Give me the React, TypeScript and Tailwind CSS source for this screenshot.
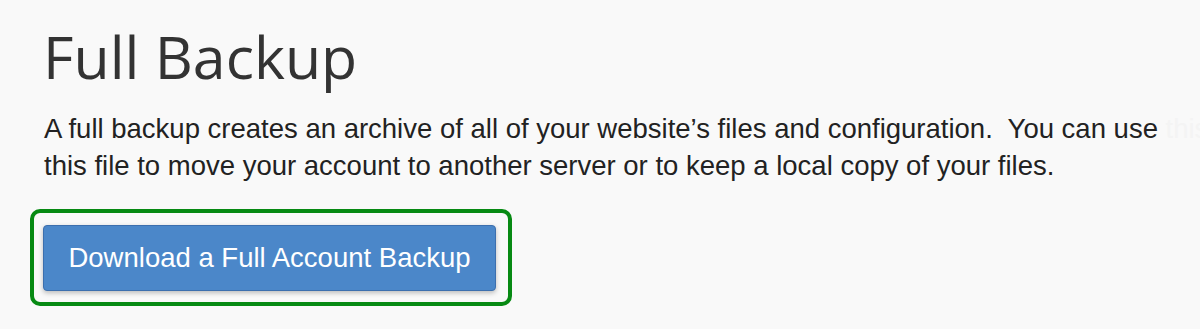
import React from 'react';

export default function App() {
  return (
    <div className="w-[1200px] h-[329px] overflow-hidden bg-[#f9f9f9] pl-[44px] pt-[27px]">
      <h1
        className="text-[59px] leading-[59px] text-[#333333] font-normal -ml-[1px]"
        style={{ fontFamily: '"Open Sans", sans-serif' }}
      >
        Full Backup
      </h1>
      <p
        className="mt-[24px] text-[27.5px] leading-[37px] text-[#222222] whitespace-nowrap"
        style={{ fontFamily: '"Liberation Sans", Arial, sans-serif' }}
      >
        A full backup creates an archive of all of your website’s files and configuration.&nbsp; You can use{' '}
        <span className="text-[#f4f4f4]">this</span>
        <br />
        this file to move your account to another server or to keep a local copy of your files.
      </p>
      {/* highlighted button */}
      <div className="mt-[25px] -ml-[14px] w-[482px] h-[97px] border-4 border-[#078a13] rounded-[10px] pt-[12px] pl-[9px]">
        <button
          className="w-[453px] h-[66px] flex items-center justify-center bg-[#4b87c9] border border-[#3c6fae] rounded-[4px] text-white text-[27.5px] shadow-[0_2px_5px_rgba(0,0,0,0.25)]"
          style={{ fontFamily: '"Liberation Sans", Arial, sans-serif' }}
        >
          Download a Full Account Backup
        </button>
      </div>
    </div>
  );
}
